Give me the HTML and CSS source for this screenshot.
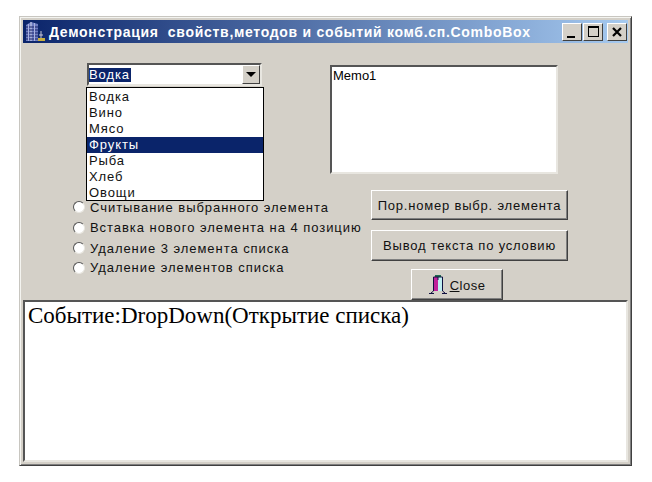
FILE: index.html
```html
<!DOCTYPE html>
<html lang="ru">
<head>
<meta charset="utf-8">
<title>ComboBox</title>
<link rel="stylesheet" href="styles.css">
</head>
<body>
<div class="window">
  <div class="titlebar">
    <svg class="app-icon" width="22" height="22" viewBox="0 0 22 22">
      <path d="M2 4 L7 1 L14 3 L14 20 L2 20 Z" fill="#6d7cc0"/>
      <path d="M7 1 L7 20" stroke="#d5d9f0" stroke-width="1"/>
      <path d="M2 6h12M2 9h12M2 12h12M2 15h12M2 18h12" stroke="#1b2268" stroke-width="1.1"/>
      <path d="M4.5 3v17M10.5 2v18" stroke="#aab2e0" stroke-width="1"/>
      <path d="M17 20 V10 M15 14h4" stroke="#c8c8d8" stroke-width="1"/>
      <rect x="14" y="17" width="7" height="3" fill="#c8b040"/>
    </svg>
    <span class="title-text">Демонстрация&nbsp; свойств,методов и событий комб.сп.ComboBox</span>
    <div class="caption-buttons">
      <div class="cap-btn"><span class="glyph-min"></span></div>
      <div class="cap-btn"><span class="glyph-max"></span></div>
      <div class="cap-btn cap-close">
        <svg width="10" height="10" viewBox="0 0 10 10"><path d="M1 1 L9 9 M9 1 L1 9" stroke="#000" stroke-width="2.2"/></svg>
      </div>
    </div>
  </div>
  <div class="form">
    <div class="left-col">
      <div class="combo">
        <span class="combo-value">Водка</span>
        <div class="combo-arrow"><span class="arrow-down"></span></div>
        <ul class="dropdown">
          <li>Водка</li>
          <li>Вино</li>
          <li>Мясо</li>
          <li class="selected">Фрукты</li>
          <li>Рыба</li>
          <li>Хлеб</li>
          <li>Овощи</li>
        </ul>
      </div>
      <div class="radios">
        <div class="radio"><span class="radio-dot"></span><span>Считывание выбранного элемента</span></div>
        <div class="radio"><span class="radio-dot"></span><span>Вставка нового элемента на 4 позицию</span></div>
        <div class="radio"><span class="radio-dot"></span><span>Удаление 3 элемента списка</span></div>
        <div class="radio"><span class="radio-dot"></span><span>Удаление элементов списка</span></div>
      </div>
    </div>
    <div class="right-col">
      <div class="memo">Memo1</div>
      <div class="btn btn-index">Пор.номер выбр. элемента</div>
      <div class="btn btn-output">Вывод текста по условию</div>
      <div class="btn btn-close">
        <svg width="18" height="19" viewBox="0 0 18 19">
          <rect x="6" y="0" width="6" height="2" fill="#1e6a50"/>
          <rect x="5" y="2" width="4" height="14" fill="#c0209a"/>
          <rect x="9" y="2" width="4" height="14" fill="#bfeef2"/>
          <path d="M4.5 2h9M4.5 2v14L2 18M13.5 2v14L16 18M9 2v3" fill="none" stroke="#101040" stroke-width="1"/>
          <path d="M0 18.5h5M13 18.5h5" stroke="#101040" stroke-width="1"/>
        </svg>
        <span class="close-label"><u>C</u>lose</span>
      </div>
    </div>
  </div>
  <div class="log">Событие:DropDown(Открытие списка)</div>
</div>
</body>
</html>
```

FILE: styles.css
```css
* { box-sizing: border-box; }

html, body { margin: 0; padding: 0; background: #fff; }

body {
  width: 652px;
  height: 482px;
  overflow: hidden;
  padding: 16px 0 0 19px;
  font-family: "Liberation Sans", Arial, sans-serif;
  font-size: 13px;
  color: #111;
}

.window {
  width: 613px;
  height: 450px;
  background: #d4d0c8;
  border-style: solid;
  border-width: 1px;
  border-color: #c8c6c0 #404040 #404040 #c8c6c0;
  box-shadow: inset 1px 1px 0 #f4f4f0, inset -1px -1px 0 #808080;
  padding: 3px;
  display: flex;
  flex-direction: column;
}

.titlebar {
  height: 23px;
  flex: none;
  background: linear-gradient(90deg, #0a246a 0%, #a6caf0 100%);
  display: flex;
  align-items: center;
  color: #fff;
  font-weight: bold;
  font-size: 14px;
  letter-spacing: 0.7px;
  white-space: nowrap;
}

.app-icon { margin-left: 1px; flex: none; }

.title-text { margin-left: 3px; }

.caption-buttons {
  margin-left: auto;
  margin-right: 1px;
  display: flex;
}

.cap-btn {
  width: 20px;
  height: 18px;
  margin-left: 1px;
  background: #d4d0c8;
  border: 1px solid;
  border-color: #fff #404040 #404040 #fff;
  display: flex;
  align-items: center;
  justify-content: center;
}

.cap-close { margin-left: 4px; }

.glyph-min {
  width: 8px;
  height: 2px;
  background: #000;
  align-self: flex-end;
  margin-bottom: 2px;
  margin-right: 2px;
}

.glyph-max {
  width: 11px;
  height: 11px;
  border: 1px solid #000;
  border-top-width: 2px;
}

.form {
  height: 257px;
  flex: none;
  display: grid;
  grid-template-columns: 307px 1fr;
}

.left-col { padding-top: 20px; }

.combo {
  position: relative;
  width: 175px;
  height: 23px;
  margin-left: 64px;
  background: #fff;
  border: 2px solid;
  border-color: #555 #e8e6e0 #e8e6e0 #555;
  display: flex;
  align-items: center;
}

.combo-value {
  background: #0a246a;
  color: #fff;
  height: 14px;
  line-height: 13px;
  padding: 0 1px 0 0;
  letter-spacing: 0.9px;
}

.combo-arrow {
  margin-left: auto;
  width: 18px;
  height: 19px;
  background: #d4d0c8;
  border: 1px solid;
  border-color: #fff #404040 #404040 #fff;
  display: flex;
  align-items: center;
  justify-content: center;
}

.arrow-down {
  width: 0;
  height: 0;
  border-left: 5px solid transparent;
  border-right: 5px solid transparent;
  border-top: 5px solid #000;
}

.dropdown {
  position: absolute;
  left: -3px;
  top: 22px;
  width: 178px;
  height: 114px;
  margin: 0;
  padding: 0;
  list-style: none;
  background: #fff;
  border: 1px solid #000;
  z-index: 2;
}

.dropdown li {
  height: 16px;
  line-height: 16px;
  padding-left: 2px;
  letter-spacing: 0.9px;
  position: relative;
  top: 1px;
}

.dropdown .selected { background: #0a246a; color: #fff; }

.radios {
  margin-top: 111px;
  display: grid;
  grid-template-rows: 20px 21px 20px 19px;
}

.radio {
  display: flex;
  align-items: center;
  padding-left: 50px;
  letter-spacing: 0.95px;
  white-space: nowrap;
}

.radio-dot {
  width: 12px;
  height: 12px;
  flex: none;
  margin-right: 5px;
  border-radius: 50%;
  background: #fff;
  border: 1px solid;
  border-color: #555 #e8e6e0 #e8e6e0 #555;
}

.right-col { padding-top: 22px; }

.memo {
  width: 228px;
  height: 109px;
  background: #fff;
  border: 2px solid;
  border-color: #555 #e8e6e0 #e8e6e0 #555;
  padding: 1px;
  line-height: 15px;
  color: #000;
}

.btn {
  background: #d4d0c8;
  border: 1px solid;
  border-color: #fff #404040 #404040 #fff;
  box-shadow: inset -1px -1px 0 #808080;
  display: flex;
  align-items: center;
  justify-content: center;
  letter-spacing: 0.8px;
  white-space: nowrap;
}

.btn-index { width: 197px; height: 30px; margin: 16px 0 0 41px; }

.btn-output { width: 197px; height: 31px; margin: 10px 0 0 41px; }

.btn-close { width: 92px; height: 31px; margin: 8px 0 0 81px; gap: 3px; letter-spacing: 0.5px; }

.close-label { padding-top: 1px; }

.log {
  flex: 1;
  background: #fff;
  border: 2px solid;
  border-color: #555 #e8e6e0 #e8e6e0 #555;
  font-family: "Liberation Serif", "Times New Roman", serif;
  font-size: 23px;
  line-height: 26px;
  color: #000;
  padding: 1px 3px;
  white-space: nowrap;
}
```
